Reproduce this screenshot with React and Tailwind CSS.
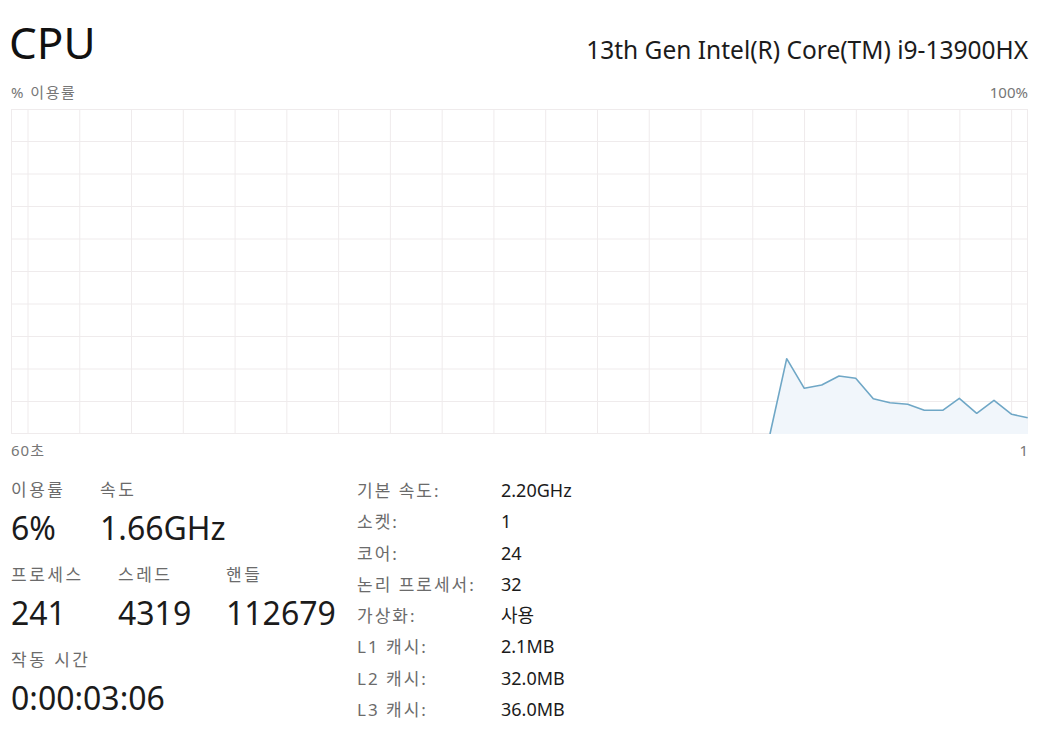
import React from 'react'

const font = { fontFamily: '"Noto Sans", "Noto Sans CJK KR", sans-serif' }

const points = [
  [770, 433], [786.7, 357.7], [804.3, 387.3], [821.7, 384], [839, 375], [855.7, 377.3],
  [873.3, 397.7], [890, 401.7], [907.7, 403.3], [924.3, 409.3], [942.7, 409.3],
  [959.3, 397.3], [976.7, 412.3], [994, 399.3], [1011.7, 413.3], [1027.7, 416.7],
]

function UsageChart() {
  const w = 1017
  const h = 325
  const pts = points.map(([x, y]) => [x - 11, y - 108])
  const line = pts.map(([x, y], i) => `${i ? 'L' : 'M'}${x} ${y}`).join(' ')
  const area = `${line} L${w} ${h} L${pts[0][0]} ${h} Z`
  const vLines = Array.from({ length: 20 }, (_, k) => 17 + 51.77 * k)
  const hLines = Array.from({ length: 9 }, (_, k) => 32.5 * (k + 1))
  return (
    <svg width={w} height={h} viewBox={`0 0 ${w} ${h}`} className="block">
      {vLines.map((x) => (
        <line key={x} x1={x} x2={x} y1={0} y2={h} stroke="#efebec" strokeWidth="1" />
      ))}
      {hLines.map((y) => (
        <line key={y} x1={0} x2={w} y1={y} y2={y} stroke="#efebec" strokeWidth="1" />
      ))}
      <rect x="0.5" y="0.5" width={w - 1} height={h - 1} fill="none" stroke="#efebec" />
      <path d={area} fill="#f1f6fb" />
      <path d={line} fill="none" stroke="#6fa7c6" strokeWidth="1.6" strokeLinejoin="round" />
    </svg>
  )
}

function Stat({ label, value, className = '' }) {
  return (
    <div className={className}>
      <div className="text-[17px] leading-none tracking-[2.5px] text-[#6b6b6b]">{label}</div>
      <div className="mt-[14px] text-[32px] leading-none text-[#1b1b1b]">{value}</div>
    </div>
  )
}

const specs = [
  ['기본 속도:', '2.20GHz'],
  ['소켓:', '1'],
  ['코어:', '24'],
  ['논리 프로세서:', '32'],
  ['가상화:', '사용'],
  ['L1 캐시:', '2.1MB'],
  ['L2 캐시:', '32.0MB'],
  ['L3 캐시:', '36.0MB'],
]

export default function App() {
  return (
    <div className="h-[750px] w-[1059px] bg-white pl-[11px] pr-[31px] pt-[20px]" style={font}>
      <div className="flex items-end justify-between">
        <h1 className="-ml-[2px] text-[44px] leading-none text-[#111]">CPU</h1>
        <div className="pb-[2px] text-[24.5px] leading-none text-[#1b1b1b]">
          13th Gen Intel(R) Core(TM) i9-13900HX
        </div>
      </div>

      <div className="mt-[21px] flex justify-between text-[15px] leading-none text-[#767676]">
        <span className="tracking-[1.5px]">% 이용률</span>
        <span>100%</span>
      </div>
      <div className="mt-[9px]">
        <UsageChart />
      </div>
      <div className="mt-[9px] flex justify-between text-[15px] leading-none text-[#767676]">
        <span className="tracking-[1px]">60초</span>
        <span>1</span>
      </div>

      <div className="mt-[23px] flex">
        <div className="w-[346px]">
          <div className="flex">
            <Stat className="w-[89px]" label="이용률" value="6%" />
            <Stat label="속도" value="1.66GHz" />
          </div>
          <div className="mt-[22px] flex">
            <Stat className="w-[107px]" label="프로세스" value="241" />
            <Stat className="w-[108px]" label="스레드" value="4319" />
            <Stat label="핸들" value="112679" />
          </div>
          <div className="mt-[22px]">
            <Stat label="작동 시간" value="0:00:03:06" />
          </div>
        </div>
        <div className="flex flex-col gap-[11.8px] leading-[19.5px]">
          {specs.map(([k, v]) => (
            <div key={k} className="flex">
              <span className="w-[144px] text-[17px] tracking-[2px] text-[#6b6b6b]">{k}</span>
              <span className="text-[18px] text-[#1b1b1b]">{v}</span>
            </div>
          ))}
        </div>
      </div>
    </div>
  )
}
